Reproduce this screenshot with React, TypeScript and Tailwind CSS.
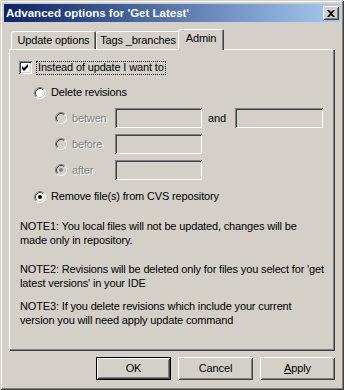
import React from "react";

const raised =
  "shadow-[inset_1px_1px_#ffffff,inset_-1px_-1px_#404040,inset_2px_2px_#d4d0c8,inset_-2px_-2px_#808080]";
const sunken =
  "shadow-[inset_1px_1px_#808080,inset_-1px_-1px_#ffffff,inset_2px_2px_#404040,inset_-2px_-2px_#d4d0c8]";

function Radio({ checked, disabled }: { checked?: boolean; disabled?: boolean }) {
  return (
    <svg width="12" height="12" viewBox="0 0 12 12" className="shrink-0">
      <circle cx="6" cy="6" r="5" fill={disabled ? "#d4d0c8" : "#ffffff"} />
      <path d="M2.11 9.89 A5.5 5.5 0 0 1 9.89 2.11" stroke="#808080" fill="none" />
      <path d="M9.89 2.11 A5.5 5.5 0 0 1 2.11 9.89" stroke="#ffffff" fill="none" />
      <path d="M2.82 9.18 A4.5 4.5 0 0 1 9.18 2.82" stroke="#404040" fill="none" />
      <path d="M9.18 2.82 A4.5 4.5 0 0 1 2.82 9.18" stroke="#d4d0c8" fill="none" />
      {checked && <circle cx="6" cy="6" r="2" fill={disabled ? "#808080" : "#000000"} />}
    </svg>
  );
}

function Checkbox() {
  return (
    <div className={`w-[13px] h-[13px] bg-white shrink-0 ${sunken} flex items-center justify-center`}>
      <svg width="13" height="13" viewBox="0 0 13 13">
        <path d="M3 5 L5 7 L9 3 L9 6 L5 10 L3 8 Z" fill="#000" />
      </svg>
    </div>
  );
}

function TextBox({ w }: { w: string }) {
  return <div className={`${w} h-[20px] bg-[#d4d0c8] shrink-0 ${sunken}`} />;
}

function Disabled({ children, w }: { children: React.ReactNode; w?: string }) {
  return (
    <span className={`${w ?? ""} text-[#808080] [text-shadow:1px_1px_0_#ffffff]`}>{children}</span>
  );
}

function Tab({ label, w }: { label: string; w: string }) {
  return (
    <div
      className={`${w} h-[18px] rounded-t-[2px] shadow-[inset_1px_1px_#ffffff,inset_-1px_0_#404040,inset_-2px_0_#808080] flex items-center justify-center pt-[1px]`}
    >
      {label}
    </div>
  );
}

function Button({ children, def }: { children: React.ReactNode; def?: boolean }) {
  return (
    <div className={`w-[75px] h-[23px] ${def ? "border border-black" : ""}`}>
      <div className={`w-full h-full ${raised} flex items-center justify-center`}>{children}</div>
    </div>
  );
}

export default function App() {
  return (
    <div
      className="w-[344px] h-[390px] bg-[#d4d0c8] p-[4px] flex flex-col text-[11px] leading-[13px] tracking-[-0.15px] text-black shadow-[inset_1px_1px_#d4d0c8,inset_-1px_-1px_#404040,inset_2px_2px_#ffffff,inset_-2px_-2px_#808080]"
      style={{ fontFamily: "'Liberation Sans', Arial, sans-serif" }}
    >
      <div className="h-[18px] flex items-center justify-between pl-[2px] pr-[1px] bg-[linear-gradient(to_right,#0a246a,#a6caf0)]">
        <span className="text-white font-bold text-[11.5px] tracking-normal">Advanced options for 'Get Latest'</span>
        <div className={`w-[16px] h-[14px] ${raised} bg-[#d4d0c8] flex items-center justify-center`}>
          <svg width="8" height="7" viewBox="0 0 8 7">
            <path d="M0 0 H2 L4 2 L6 0 H8 L5 3.5 L8 7 H6 L4 5 L2 7 H0 L3 3.5 Z" fill="#000" />
          </svg>
        </div>
      </div>

      <div className="flex-1 flex flex-col px-[5px] pt-[7px]">
        <div className="h-[20px] flex items-end pl-[2px]">
          <Tab label="Update options" w="w-[85px]" />
          <Tab label="Tags _branches" w="w-[84px]" />
          <div className="relative z-10 -ml-[2px] w-[46px] h-[21px] -mb-[1px] bg-[#d4d0c8] rounded-t-[2px] shadow-[inset_1px_1px_#ffffff,inset_-1px_0_#404040,inset_-2px_0_#808080] flex justify-center pt-[3px]">
            Admin
          </div>
        </div>

        <div className="h-[302px] shadow-[inset_1px_1px_#ffffff,inset_-1px_-1px_#404040,inset_-2px_-2px_#808080] pl-[10px] pt-[12px] flex flex-col">
          <div className="flex items-center h-[13px]">
            <Checkbox />
            <span className="ml-[4px] border border-dotted border-black px-[1px] h-[14px] flex items-center">
              Instead of update I want to
            </span>
          </div>

          <div className="flex items-center h-[13px] mt-[12px] ml-[15px]">
            <Radio />
            <span className="ml-[5px]">Delete revisions</span>
          </div>

          <div className="flex flex-col gap-[6px] mt-[9px] ml-[36px]">
            <div className="flex items-center">
              <Radio disabled />
              <Disabled w="ml-[5px] w-[43px]">betwen</Disabled>
              <TextBox w="w-[87px]" />
              <span className="ml-[6px] w-[27px]">and</span>
              <TextBox w="w-[88px]" />
            </div>
            <div className="flex items-center">
              <Radio disabled />
              <Disabled w="ml-[5px] w-[43px]">before</Disabled>
              <TextBox w="w-[87px]" />
            </div>
            <div className="flex items-center">
              <Radio disabled checked />
              <Disabled w="ml-[5px] w-[43px]">after</Disabled>
              <TextBox w="w-[87px]" />
            </div>
          </div>

          <div className="flex items-center h-[13px] mt-[10px] ml-[15px]">
            <Radio checked />
            <span className="ml-[5px]">Remove file(s) from CVS repository</span>
          </div>

          <div className="ml-[1px] mt-[16px] whitespace-nowrap leading-[14px]">
            NOTE1: You local files will not be updated, changes will be
            <br />
            made only in repository.
          </div>
          <div className="ml-[1px] mt-[15px] whitespace-nowrap leading-[14px]">
            NOTE2: Revisions will be deleted only for files you select for 'get
            <br />
            latest versions' in your IDE
          </div>
          <div className="ml-[1px] mt-[9px] whitespace-nowrap leading-[14px]">
            NOTE3: If you delete revisions which include your current
            <br />
            version you will need apply update command
          </div>
        </div>

        <div className="flex justify-end gap-[7px] mt-[6px]">
          <Button def>OK</Button>
          <Button>Cancel</Button>
          <Button>
            <span>
              <span className="underline">A</span>pply
            </span>
          </Button>
        </div>
      </div>
    </div>
  );
}
